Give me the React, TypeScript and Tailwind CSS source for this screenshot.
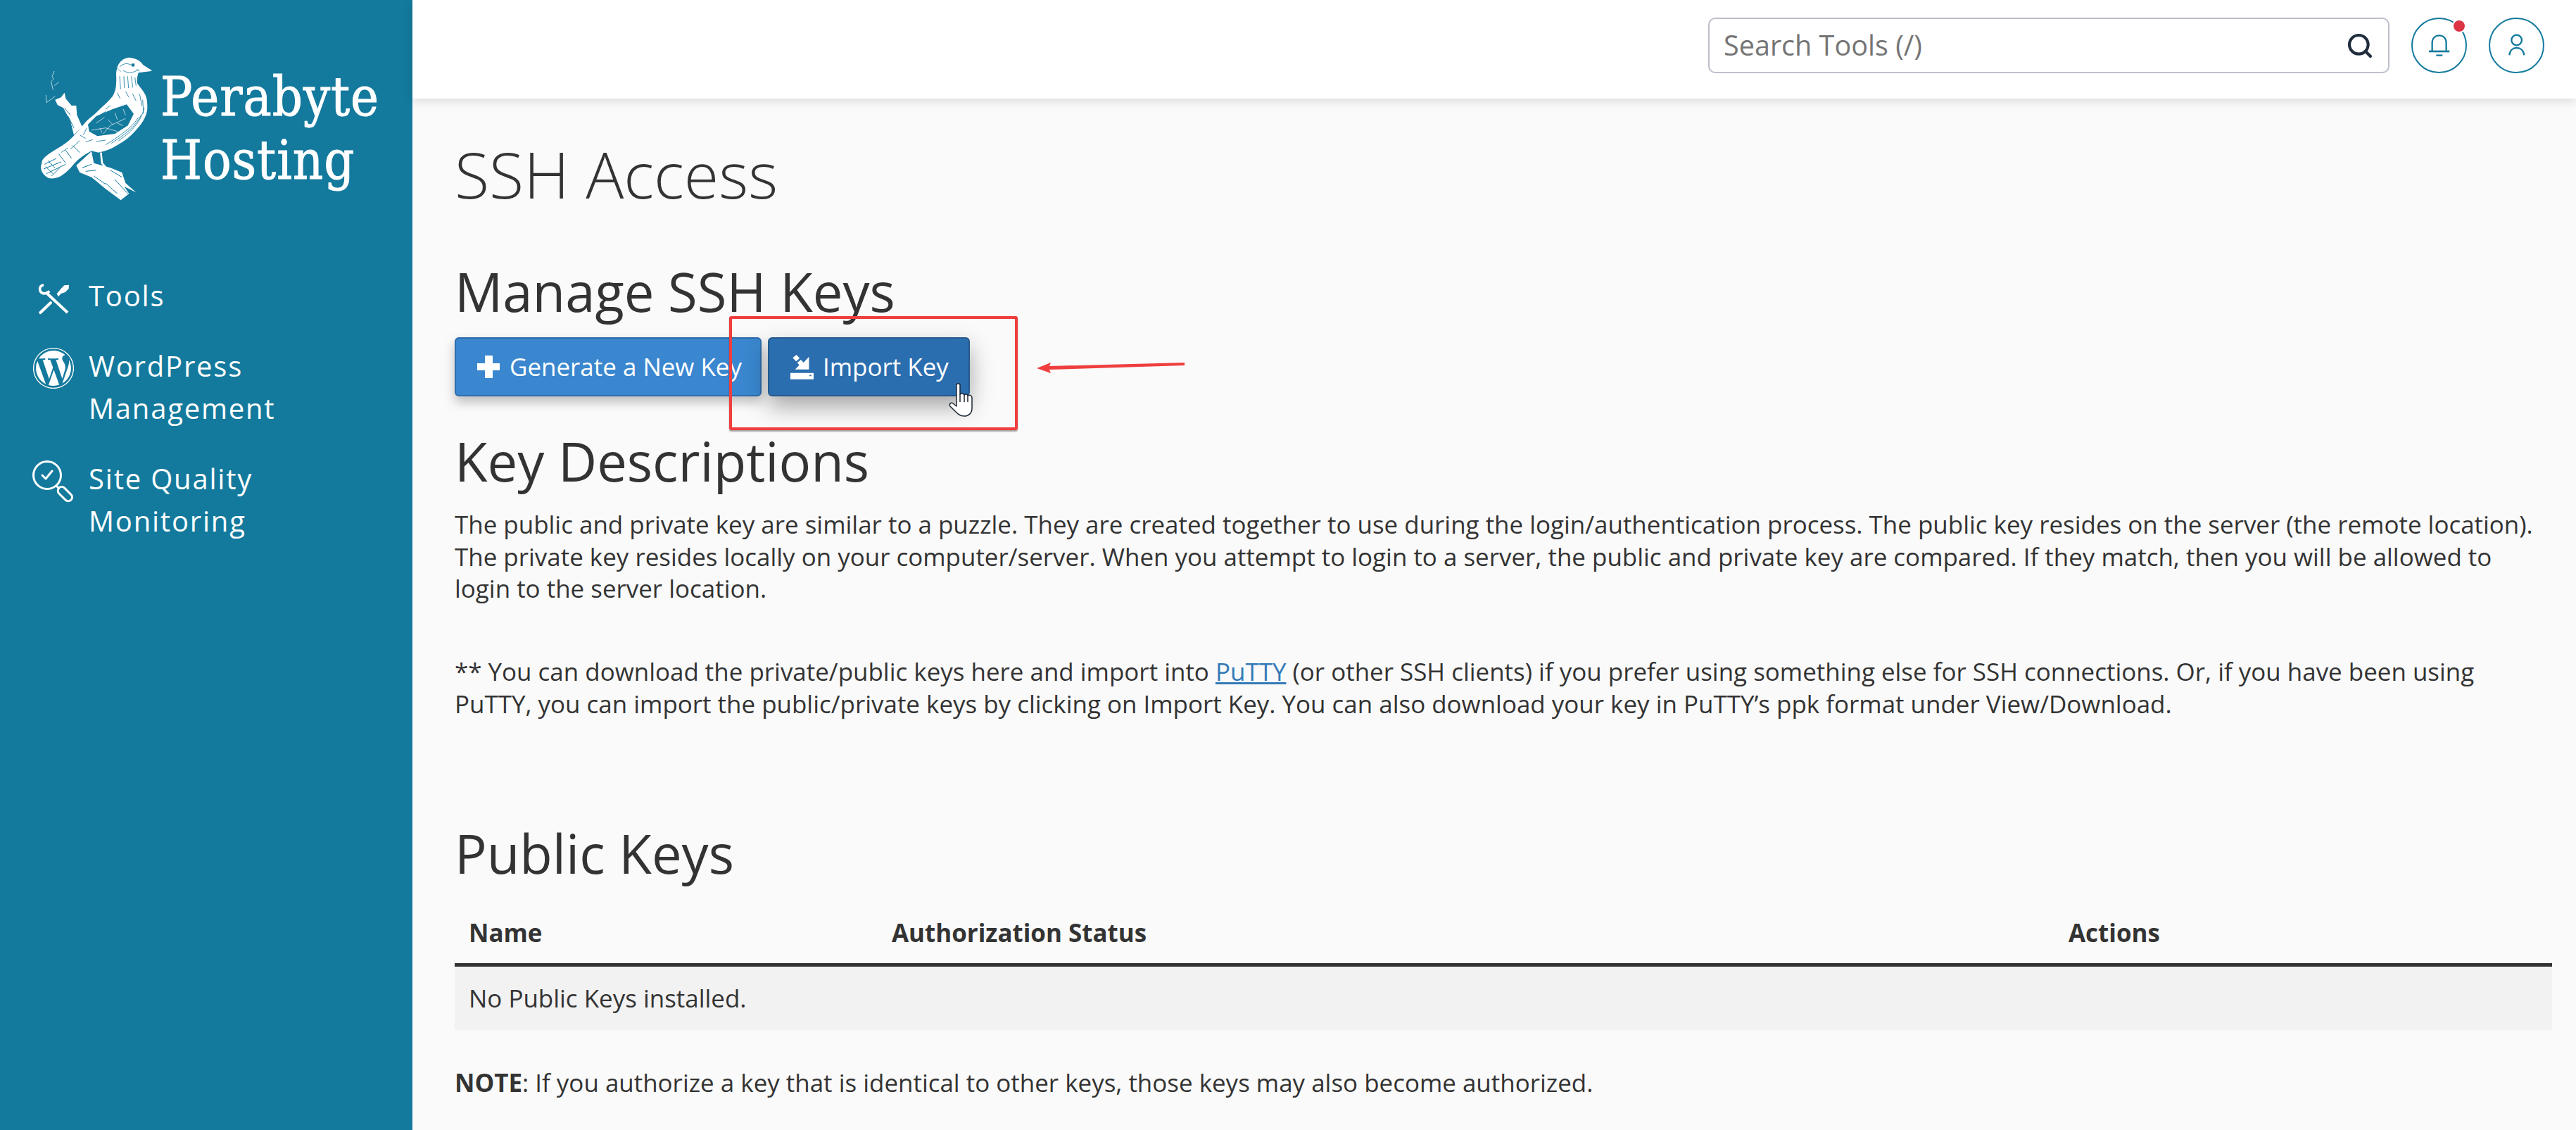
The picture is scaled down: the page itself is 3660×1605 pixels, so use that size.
import { Search } from 'lucide-react';
import { FaWordpress } from 'react-icons/fa';

const TEAL = '#147a9d';

// engraved bird, drawn in a 3x grid of the logo area
const Bird = () => (
  <svg viewBox="0 0 540 645" className="w-[180px] h-[215px] shrink-0" fill="none">
    <path d="M85 200 L110 190 L125 170 L130 195 L155 225 L175 225 L178 265 L200 315 L165 350 L150 290 L120 235 L95 222 Z" fill="#fff" />
    <path d="M82 78 L72 100 L78 112 L68 122 L76 158 M82 140 L100 125 M46 180 L48 212 L72 195 L85 185" stroke="#fff" strokeWidth="2" />
    <path d="M175 480 L240 420 L250 470 L320 490 L370 510 L385 555 L430 595 L380 570 L400 600 L365 628 L300 580 L240 530 L190 510 Z" fill="#fff" />
    <path d="M497 75 L460 52 C450 35 430 22 400 20 C375 22 352 42 348 70 C342 90 348 110 345 130 C345 150 340 170 330 185 C310 210 290 225 270 245 C255 262 240 270 225 285 C210 300 200 312 190 325 C170 350 150 370 130 385 C105 403 80 415 60 430 C40 445 28 455 28 470 C22 485 25 497 28 505 C35 520 48 530 60 535 C80 537 95 532 110 525 C130 512 148 495 160 480 C170 468 180 458 190 450 C205 438 222 428 240 418 L270 425 C290 420 310 415 330 405 C360 388 388 372 410 350 C430 330 448 310 460 290 C472 270 478 252 478 235 C478 215 478 198 470 180 C460 160 445 145 435 130 C432 115 436 98 440 85 L495 78 Z" fill="#fff" />
    <path d="M225 305 L260 270 L330 240 L390 220 L420 260 L395 310 L340 345 L265 355 L230 335 Z" fill={TEAL} />
    <path d="M240 330 L300 320 L350 335 M290 345 L320 310 L385 280 M260 300 L295 275 M340 255 L350 285 M375 240 L385 265 M310 285 L330 305 M275 320 L285 340 M350 300 L375 310" stroke="#fff" strokeWidth="2" />
    <path d="M360 60 C375 45 395 40 420 58 M375 75 C395 90 420 85 440 72 M360 100 L364 155 M378 100 L380 150 M394 100 L398 150 M410 100 L416 148 M425 105 L430 140 M350 170 L362 195 M385 165 L400 190 M415 175 L430 205 M445 175 L455 225 M458 200 L462 260 M465 235 C450 290 420 330 355 375 M452 265 C430 310 390 345 325 385 M440 275 C415 315 375 345 300 392 M300 240 L320 225 M270 270 L300 250 M220 320 L205 350 M190 350 L215 365 M215 380 L245 370 M260 378 L300 372 M150 410 L190 375 M110 425 L140 405" stroke={TEAL} strokeWidth="2.5" />
    <path d="M40 475 L90 450 M36 495 L110 465 M48 515 L130 475 M70 525 L105 490 M55 460 L85 490 M45 485 L75 515 M100 430 L130 470 M130 415 L155 450 M160 395 L190 425" stroke={TEAL} strokeWidth="3" />
    <circle cx="417" cy="52" r="7" fill={TEAL} />
    <path d="M345 62 L365 80 M432 70 L445 78" stroke={TEAL} strokeWidth="2" />
    <path d="M280 425 L285 470 L310 500 L325 545" stroke="#fff" strokeWidth="8" />
    <path d="M270 425 L272 465 M295 425 L298 465" stroke={TEAL} strokeWidth="3" />
    <path d="M200 490 L240 475 M215 505 L260 500 M250 525 L300 560 M300 555 L350 600 M340 540 L395 600 M320 500 L370 530 M140 270 L165 320 M125 235 L150 265" stroke={TEAL} strokeWidth="3" />
  </svg>
);

const ToolsIcon = () => (
  <svg viewBox="35 32 138 134" className="w-[46px] h-[44.7px] mt-[12px] ml-[7px]" fill="none" stroke="#fff">
    <path d="M62 41 C48 41 43 55 47 65 C53 78 70 82 87 67" strokeWidth="11" />
    <path d="M74 74 L164 158" strokeWidth="12" />
    <path d="M48 158 L92 116" strokeWidth="12" strokeLinecap="round" />
    <path d="M118 78 L136 56 L150 42 L170 40 L169 56 L154 71 L135 78 L125 90 Z" fill="#fff" strokeWidth="0" />
  </svg>
);

const QualityIcon = () => (
  <svg viewBox="0 0 60 60" className="w-[60px] h-[60px] mt-[4px]" fill="none" stroke="#fff" strokeWidth="3">
    <circle cx="21" cy="21" r="19.5" />
    <path d="M14 21 L19 26 L28 15" strokeLinecap="round" strokeLinejoin="round" />
    <path d="M34 36 L38 40" />
    <rect x="41" y="36" width="11" height="24" rx="5.5" transform="rotate(-45 46 48)" />
  </svg>
);

const ImportIcon = () => (
  <svg viewBox="220 125 100 107" className="w-[33px] h-[36px] shrink-0">
    <path d="M230 140 L246 127 L260 141 L245 155 Z" fill="#fff" />
    <path d="M300 135 V190 H240 L258 172 L250 160 L265 148 L277 160 Z" fill="#fff" />
    <path d="M220 205 H320 V232 H220 Z M302 213 V219 H310 V213 Z" fill="#fff" fillRule="evenodd" />
  </svg>
);

const HandCursor = () => (
  <svg viewBox="0 0 36 48" className="absolute left-[1348px] top-[544px] w-[36px] h-[48px]">
    <path d="M11 3 C11 0 16 0 16 3 L16 16 C19 14 21 15 22 17 C24 15 27 16 27 18 C30 16 33 18 33 21 L33 36 C33 43 28 47 22 47 C16 47 13 44 9 40 L2 33 C0 30 3 27 6 29 L11 33 Z" fill="#fff" stroke="#1f2937" strokeWidth="1.5" strokeLinejoin="round" />
    <path d="M16 16 V27 M22 17 V27 M27 18 V27" stroke="#1f2937" strokeWidth="1.5" />
  </svg>
);

const BellIcon = () => (
  <svg viewBox="88 100 100 100" className="w-[33.3px] h-[33.3px]" fill="none" stroke={TEAL} strokeWidth="7">
    <path d="M108 175 V138 C108 118 122 107 138 107 C154 107 168 118 168 138 V175" />
    <path d="M94 175 H182" strokeWidth="8" />
    <path d="M125 192 H152" />
  </svg>
);

const UserIcon = () => (
  <svg viewBox="418 100 100 100" className="w-[33.3px] h-[33.3px]" fill="none" stroke={TEAL} strokeWidth="7">
    <circle cx="468" cy="127" r="22" />
    <path d="M437 191 C439 170 452 160 468 160 C484 160 498 170 500 191" />
  </svg>
);

const NavItem = ({ icon, lines, className }: { icon: React.ReactNode; lines: string[]; className: string }) => (
  <div className={`flex ${className}`}>
    <div className="w-[126px] shrink-0 pl-[46px]">{icon}</div>
    <div className="text-[40px] leading-[60px] tracking-[1.8px] text-white">
      {lines.map((l) => (
        <div key={l}>{l}</div>
      ))}
    </div>
  </div>
);

const App = () => {
  return (
    <div className="relative w-[3660px] h-[1605px] overflow-hidden flex bg-[#fafafa] text-[#333] font-['Open_Sans',sans-serif] text-[34.95px] leading-[45.7px]">
      <aside className="w-[586px] shrink-0 bg-[#147a9d] flex flex-col">
        <div className="flex pl-[50px] pt-[75px] h-[374px]">
          <Bird />
          <div className="ml-[-2px] pt-[18px] text-white font-['DejaVu_Serif',serif] text-[76px] leading-[90px] tracking-[1px] [-webkit-text-stroke:1px_white] origin-left scale-x-[0.89] whitespace-nowrap">
            <div>Perabyte</div>
            <div>Hosting</div>
          </div>
        </div>
        <NavItem icon={<ToolsIcon />} lines={['Tools']} className="mt-[16px]" />
        <NavItem icon={<FaWordpress className="w-[60px] h-[60px] mt-[3px] text-white" />} lines={['WordPress', 'Management']} className="mt-[40px]" />
        <NavItem icon={<QualityIcon />} lines={['Site Quality', 'Monitoring']} className="mt-[40px]" />
      </aside>

      <main className="flex-1 min-w-0 flex flex-col">
        <header className="h-[140px] shrink-0 bg-white shadow-[0_4px_14px_rgba(0,0,0,0.12)] flex items-start pt-[25px] justify-end gap-[31px] pr-[45px]">
          <div className="w-[968px] h-[79px] rounded-[10px] border-2 border-[#bcbfcc] flex items-center justify-between pl-[20px] pr-[20px] bg-white">
            <span className="text-[39.6px] text-[#757575]">Search Tools (/)</span>
            <Search className="w-[40px] h-[40px] text-[#1f2d3d]" strokeWidth={2.5} />
          </div>
          <div className="relative w-[79px] h-[79px] rounded-full border-2 border-[#147a9d] flex items-center justify-center">
            <BellIcon />
            <span className="absolute right-[-1px] top-[0px] w-[20px] h-[20px] rounded-full bg-[#dc3545] border-2 border-white box-border" />
          </div>
          <div className="w-[79px] h-[79px] rounded-full border-2 border-[#147a9d] flex items-center justify-center">
            <UserIcon />
          </div>
        </header>

        <div className="pl-[60px] pr-[34px]">
          <h1 className="mt-[62px] text-[90px] leading-[90px] font-light">SSH Access</h1>
          <h2 className="mt-[80px] text-[76px] leading-[84px] font-normal">Manage SSH Keys</h2>
          <div className="mt-[23px] flex gap-[9px]">
            <button className="h-[84px] w-[436px] flex items-center whitespace-nowrap pl-[30px] rounded-[6px] border-2 border-[#2d6cad] bg-[#3a87cf] text-white shadow-[0_8px_16px_rgba(0,0,0,0.25)]">
              <span className="relative w-[32px] h-[32px] shrink-0 mr-[14px]">
                <span className="absolute left-[11px] top-0 w-[11px] h-[32px] bg-white" />
                <span className="absolute left-0 top-[11px] w-[32px] h-[10px] bg-white" />
              </span>
              Generate a New Key
            </button>
            <button className="h-[84px] w-[287px] flex items-center pl-[30px] rounded-[6px] border-2 border-[#25598c] bg-[#2b6eaf] text-white shadow-[0_14px_32px_rgba(0,0,0,0.35)]">
              <ImportIcon />
              <span className="ml-[13px]">Import Key</span>
            </button>
          </div>
          <h2 className="mt-[50px] text-[76px] leading-[84px] font-normal">Key Descriptions</h2>
          <p className="mt-[25px] pr-[20px]">
            The public and private key are similar to a puzzle. They are created together to use during the login/authentication process. The public key resides on the server (the remote location). The private key resides locally on your computer/server. When you attempt to login to a server, the public and private key are compared. If they match, then you will be allowed to login to the server location.
          </p>
          <p className="mt-[72px] pr-[20px]">
            ** You can download the private/public keys here and import into <a className="text-[#337ab7] underline">PuTTY</a> (or other SSH clients) if you prefer using something else for SSH connections. Or, if you have been using PuTTY, you can import the public/private keys by clicking on Import Key. You can also download your key in PuTTY’s ppk format under View/Download.
          </p>
          <h2 className="mt-[147px] text-[76px] leading-[84px] font-normal">Public Keys</h2>
          <table className="mt-[28px] w-full table-fixed">
            <thead>
              <tr className="h-[89px] border-b-[5px] border-[#333] text-left">
                <th className="w-[621px] pl-[20px] font-bold">Name</th>
                <th className="w-[1672px] font-bold">Authorization Status</th>
                <th className="font-bold">Actions</th>
              </tr>
            </thead>
            <tbody>
              <tr className="h-[92px] bg-[#f2f2f2]">
                <td colSpan={3} className="pl-[20px]">No Public Keys installed.</td>
              </tr>
            </tbody>
          </table>
          <p className="mt-[52px]">
            <strong>NOTE</strong>: If you authorize a key that is identical to other keys, those keys may also become authorized.
          </p>
        </div>
      </main>

      {/* annotation drawn over the screenshot */}
      <div className="absolute left-[1036px] top-[449px] w-[410px] h-[162px] border-[4px] border-[#ef3e3e] rounded-[3px] shadow-[0_2px_2px_rgba(0,0,0,0.35)]" />
      <svg viewBox="0 0 220 20" className="absolute left-[1470px] top-[510px] w-[220px] h-[20px]">
        <path d="M3 13 L23 5 L21 10 L213 5 L213 9 L21 15 L23 20 Z" fill="#ef3e3e" />
      </svg>
      <HandCursor />
    </div>
  );
};

export default App;
